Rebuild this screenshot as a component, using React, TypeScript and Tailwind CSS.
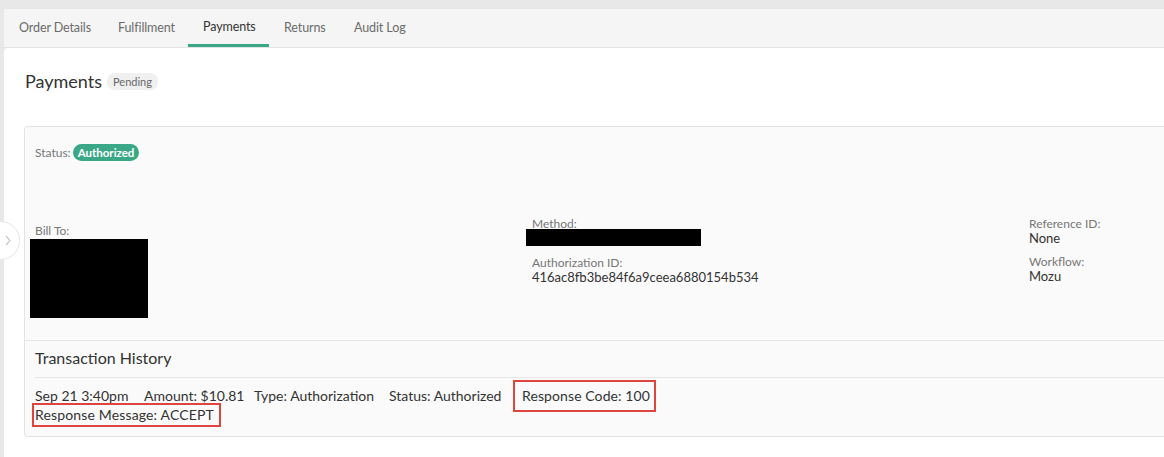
import React from "react";

const tabs: [string, string][] = [
  ["Order Details", "w-[99px]"],
  ["Fulfillment", "w-[85px]"],
  ["Payments", "w-[81px]"],
  ["Returns", "w-[70px]"],
  ["Audit Log", "w-[80px]"],
];

export default function App() {
  return (
    <div
      className="relative w-[1164px] h-[457px] overflow-hidden bg-[#e8e8e8] pt-[9px] pl-[4px] flex flex-col text-[#333]"
      style={{ fontFamily: "Lato, 'Open Sans', sans-serif" }}
    >
      {/* Tabs */}
      <div className="h-[39px] shrink-0 bg-[#f5f5f5] border-b border-[#e3e3e3] flex">
        {tabs.map(([t, w]) => (
          <div
            key={t}
            className={
              t === "Payments"
                ? `${w} h-full pl-[15px] flex items-center whitespace-nowrap text-[12.5px] tracking-[-0.1px] text-[#333] border-b-[3px] border-[#3aa886] pt-[2px]`
                : `${w} h-full pl-[15px] flex items-center whitespace-nowrap text-[12.5px] tracking-[-0.1px] text-[#6b6b6b]`
            }
          >
            {t}
          </div>
        ))}
      </div>

      {/* White panel */}
      <div className="flex-1 bg-white rounded-tl-[4px] pl-[21px] pt-[21px]">
        <div className="flex items-center h-[24px]">
          <span className="text-[18px] leading-[24px] text-[#333]">Payments</span>
          <span className="ml-[5px] h-[17px] px-[6px] rounded-[8px] bg-[#f0f0f0] text-[11px] leading-[17px] text-[#666]">
            Pending
          </span>
        </div>

        {/* Card */}
        <div className="mt-[33px] -ml-px h-[311px] bg-[#fafafa] border border-[#e3e3e3] border-r-0 rounded-l-[4px]">
          <div className="h-[214px] border-b border-[#e6e6e6] pt-[17px] pl-[10px]">
            <div className="flex items-center h-[17px]">
              <span className="text-[12px] text-[#777]">Status:</span>
              <span className="ml-[2px] h-[17px] px-[5px] rounded-full bg-[#3aa886] text-white text-[11.5px] leading-[17px] font-bold">
                Authorized
              </span>
            </div>
            <div className="mt-[57px] grid grid-cols-[497px_497px_1fr]">
              <div className="pt-[6px]">
                <div className="text-[12px] leading-[14px] text-[#777]">Bill To:</div>
                <div className="mt-[1px] -ml-[5px] w-[118px] h-[79px] bg-black" />
              </div>
              <div>
                <div className="text-[12px] leading-[12px] text-[#777]">Method:</div>
                <div className="-mt-px -ml-[6px] w-[175px] h-[17px] bg-black" />
                <div className="mt-[11px] text-[12px] leading-[12px] text-[#777]">Authorization ID:</div>
                <div className="text-[13px] leading-[16px] text-[#333]">416ac8fb3be84f6a9ceea6880154b534</div>
              </div>
              <div>
                <div className="text-[12px] leading-[12px] text-[#777]">Reference ID:</div>
                <div className="text-[13px] leading-[16px] text-[#333]">None</div>
                <div className="mt-[10px] text-[12px] leading-[12px] text-[#777]">Workflow:</div>
                <div className="text-[13px] leading-[16px] text-[#333]">Mozu</div>
              </div>
            </div>
          </div>

          <div className="h-[36px] pt-[7px] pl-[10px] text-[16px] leading-[20px] text-[#333]">
            Transaction History
          </div>
          <div className="ml-[10px] h-px bg-[#e6e6e6]" />
          <div className="pl-[10px] pt-[9px] text-[14px] leading-[18px] text-[#333]">
            <div className="flex">
              <span className="w-[109px] whitespace-nowrap">Sep 21 3:40pm</span>
              <span className="w-[110px] whitespace-nowrap">Amount: $10.81</span>
              <span className="w-[135px] whitespace-nowrap">Type: Authorization</span>
              <span className="w-[131px] whitespace-nowrap">Status: Authorized</span>
              <span className="w-[129px] whitespace-nowrap outline-2 outline-solid outline-[#e0443e] outline-offset-[5px] pl-[2px] tracking-[0.1px]">
                Response Code: 100
              </span>
            </div>
            <div className="mt-[1px]">
              <span className="inline-block w-[183px] whitespace-nowrap outline-2 outline-solid outline-[#e0443e] outline-offset-[1px] tracking-[0.15px]">
                Response Message: ACCEPT
              </span>
            </div>
          </div>
        </div>
      </div>

      {/* Side toggle */}
      <div className="absolute left-[-19px] top-[221px] w-[39px] h-[39px] rounded-full bg-white border border-[#e6e6e6] flex items-center justify-end pr-[8px]">
        <svg width="6" height="11" viewBox="0 0 6 11" fill="none">
          <path d="M1 1l4 4.5L1 10" stroke="#c8c8c8" strokeWidth="1.2" />
        </svg>
      </div>
    </div>
  );
}
